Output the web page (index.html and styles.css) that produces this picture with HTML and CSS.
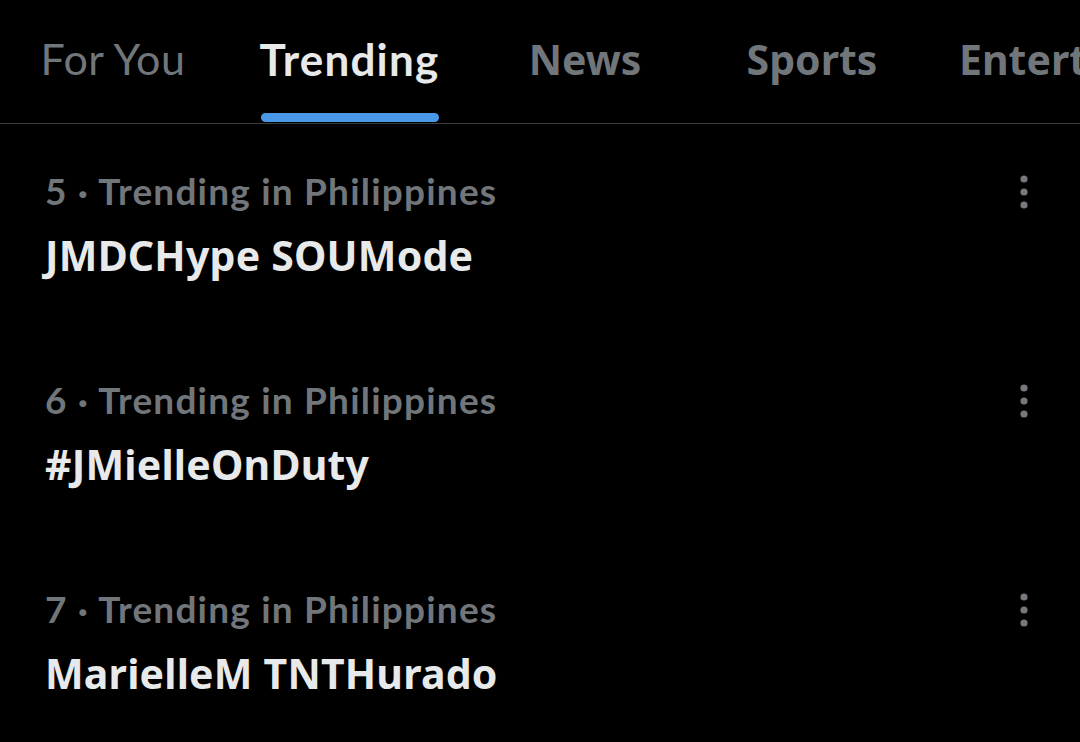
FILE: index.html
```html
<!DOCTYPE html>
<html>
<head>
<meta charset="utf-8">
<link rel="stylesheet" href="styles.css">
</head>
<body>
<div class="page">
  <nav class="tabs">
    <div class="tab tab-lato">For You</div>
    <div class="tab tab-lato active">Trending<span class="indicator"></span></div>
    <div class="tab">News</div>
    <div class="tab">Sports</div>
    <div class="tab tab-last">Entertainment</div>
  </nav>
  <ul class="trends">
    <li class="trend">
      <div class="trend-body">
        <div class="meta">5 · Trending in Philippines</div>
        <div class="title">JMDCHype SOUMode</div>
      </div>
      <svg class="more" viewBox="0 0 24 40" width="24" height="40"><circle cx="12" cy="7" r="3.6"/><circle cx="12" cy="20" r="3.6"/><circle cx="12" cy="33" r="3.6"/></svg>
    </li>
    <li class="trend">
      <div class="trend-body">
        <div class="meta">6 · Trending in Philippines</div>
        <div class="title">#JMielleOnDuty</div>
      </div>
      <svg class="more" viewBox="0 0 24 40" width="24" height="40"><circle cx="12" cy="7" r="3.6"/><circle cx="12" cy="20" r="3.6"/><circle cx="12" cy="33" r="3.6"/></svg>
    </li>
    <li class="trend">
      <div class="trend-body">
        <div class="meta">7 · Trending in Philippines</div>
        <div class="title">MarielleM TNTHurado</div>
      </div>
      <svg class="more" viewBox="0 0 24 40" width="24" height="40"><circle cx="12" cy="7" r="3.6"/><circle cx="12" cy="20" r="3.6"/><circle cx="12" cy="33" r="3.6"/></svg>
    </li>
  </ul>
</div>
</body>
</html>
```

FILE: styles.css
```css
* { box-sizing: border-box; }
html, body {
  margin: 0;
  padding: 0;
  background: #000;
  overflow: hidden;
}
.page {
  width: 1080px;
  height: 742px;
  background: #000;
  overflow: hidden;
}
.tabs {
  display: grid;
  grid-template-columns: 226px 247px 224px 230px max-content;
  height: 124px;
  border-bottom: 1px solid #3a3d40;
  white-space: nowrap;
}
.tab {
  position: relative;
  text-align: center;
  padding-top: 31px;
  font-family: "Noto Sans", "Open Sans", sans-serif;
  font-weight: 700;
  font-size: 41px;
  line-height: 56px;
  color: #71767b;
}
.tab-lato {
  font-family: Lato, sans-serif;
  font-size: 43px;
  letter-spacing: 0.5px;
}
.tab-lato:first-child { font-weight: 400; }
.tab-last { text-align: left; padding-left: 32px; }
.tab.active {
  color: #e7e9ea;
  font-weight: 700;
  font-size: 44px;
  letter-spacing: 1.2px;
}
.indicator {
  position: absolute;
  left: 50%;
  bottom: 1px;
  width: 178px;
  height: 9px;
  margin-left: -89px;
  border-radius: 5px;
  background: #4a99e9;
}
.trends {
  list-style: none;
  margin: 0;
  padding: 0;
}
.trend {
  display: flex;
  justify-content: space-between;
  align-items: flex-start;
  height: 209px;
  padding: 46px 44px 0 45px;
}
.meta {
  font-family: Lato, sans-serif;
  font-weight: 700;
  font-size: 37px;
  line-height: 42px;
  letter-spacing: 1.2px;
  color: #71767b;
}
.title {
  margin-top: 18px;
  font-family: "Noto Sans", "Open Sans", sans-serif;
  font-weight: 700;
  font-size: 41px;
  line-height: 50px;
  letter-spacing: 0.2px;
  color: #e7e9ea;
}
.more {
  margin-top: 2px;
  fill: #75787c;
}
```
